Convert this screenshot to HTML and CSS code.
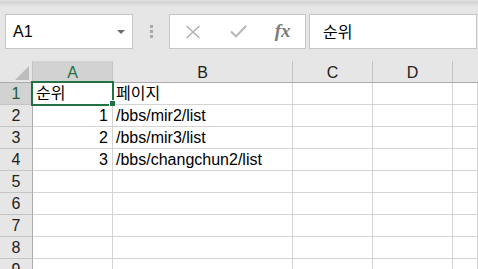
FILE: index.html
```html
<!DOCTYPE html>
<html lang="ko">
<head>
    <meta charset="UTF-8">
    <title>Sheet</title>
    <link rel="stylesheet" href="styles.css">
</head>
<body>
    <!-- Name box + formula bar -->
    <div class="toolbar">
        <div class="name-box">
            <span>A1</span>
            <span class="arrow"></span>
        </div>
        <div class="grip"><i></i><i></i><i></i></div>
        <div class="fx-buttons">
            <span class="fx-btn">
                <svg width="16" height="14" viewBox="0 0 16 14"><path d="M1.5 1 L14.5 13 M14.5 1 L1.5 13" stroke="#b3b3b3" stroke-width="1.6" fill="none"/></svg>
            </span>
            <span class="fx-btn">
                <svg width="17" height="13" viewBox="0 0 17 13"><path d="M1 6.5 L6 11.5 L16 1" stroke="#b3b3b3" stroke-width="1.9" fill="none"/></svg>
            </span>
            <span class="fx-btn fx-label">fx</span>
        </div>
        <div class="formula">순위</div>
    </div>

    <!-- Grid -->
    <div class="sheet-wrap">
        <div class="sheet">
            <div class="corner"><span class="tri"></span></div>
            <div class="col-head active">A</div>
            <div class="col-head">B</div>
            <div class="col-head">C</div>
            <div class="col-head">D</div>
            <div class="col-head last"></div>

            <div class="row-head active">1</div>
            <div class="cell">순위</div>
            <div class="cell">페이지</div>
            <div class="cell"></div><div class="cell"></div><div class="cell"></div>

            <div class="row-head">2</div>
            <div class="cell num">1</div>
            <div class="cell">/bbs/mir2/list</div>
            <div class="cell"></div><div class="cell"></div><div class="cell"></div>

            <div class="row-head">3</div>
            <div class="cell num">2</div>
            <div class="cell">/bbs/mir3/list</div>
            <div class="cell"></div><div class="cell"></div><div class="cell"></div>

            <div class="row-head">4</div>
            <div class="cell num">3</div>
            <div class="cell">/bbs/changchun2/list</div>
            <div class="cell"></div><div class="cell"></div><div class="cell"></div>

            <div class="row-head">5</div>
            <div class="cell"></div><div class="cell"></div><div class="cell"></div><div class="cell"></div><div class="cell"></div>
            <div class="row-head">6</div>
            <div class="cell"></div><div class="cell"></div><div class="cell"></div><div class="cell"></div><div class="cell"></div>
            <div class="row-head">7</div>
            <div class="cell"></div><div class="cell"></div><div class="cell"></div><div class="cell"></div><div class="cell"></div>
            <div class="row-head">8</div>
            <div class="cell"></div><div class="cell"></div><div class="cell"></div><div class="cell"></div><div class="cell"></div>
            <div class="row-head">9</div>
            <div class="cell"></div><div class="cell"></div><div class="cell"></div><div class="cell"></div><div class="cell"></div>
        </div>

        <!-- selection on A1 -->
        <div class="selection"></div>
        <div class="fill-handle"></div>
    </div>
</body>
</html>
```

FILE: styles.css
```css
body {
    margin: 0;
    padding: 0;
    overflow: hidden;
    background: #fff;
    font-family: "Liberation Sans", Arial, "Noto Sans CJK KR", sans-serif;
    font-size: 16px;
    color: #000;
}

.toolbar {
    height: 61px;
    box-sizing: border-box;
    padding: 14px 0 0 5px;
    display: flex;
    align-items: flex-start;
    background: linear-gradient(#e2e2e2 0, #d3d3d3 2px, #e6e6e6 7px);
}

.name-box {
    width: 128px;
    height: 35px;
    box-sizing: border-box;
    border: 1px solid #c6c6c6;
    background: #fff;
    display: flex;
    align-items: center;
    justify-content: space-between;
    padding: 0 7px 0 7px;
    font-size: 16px;
}

.name-box .arrow {
    width: 0;
    height: 0;
    border-left: 4px solid transparent;
    border-right: 4px solid transparent;
    border-top: 4px solid #6b6b6b;
    margin-top: 1px;
}

.grip {
    width: 36px;
    height: 35px;
    display: flex;
    flex-direction: column;
    align-items: center;
    justify-content: center;
    gap: 2px;
    padding-left: 1px;
    box-sizing: border-box;
}

.grip i {
    width: 3px;
    height: 3px;
    background: #a8a8a8;
}

.fx-buttons {
    width: 137px;
    height: 35px;
    box-sizing: border-box;
    border: 1px solid #c6c6c6;
    background: #fff;
    display: flex;
    padding-left: 1px;
}

.fx-btn {
    width: 45px;
    display: flex;
    align-items: center;
    justify-content: center;
}

.fx-label {
    font-family: "Liberation Serif", "Times New Roman", serif;
    font-style: italic;
    font-weight: bold;
    font-size: 19px;
    color: #7a7a7a;
    padding-bottom: 2px;
}

.formula {
    width: 168px;
    height: 35px;
    margin-left: 3px;
    box-sizing: border-box;
    border: 1px solid #c6c6c6;
    background: #fff;
    padding-left: 13px;
    line-height: 32px;
    font-family: "Noto Sans CJK KR", sans-serif;
    font-size: 16px;
}

.sheet-wrap {
    position: relative;
}

.sheet {
    display: grid;
    grid-template-columns: 33px 80px 180px 80px 80px 1fr;
    grid-auto-rows: 22px;
}

.sheet > div {
    box-sizing: border-box;
    line-height: 21px;
    white-space: nowrap;
}

.corner {
    position: relative;
    background: #e6e6e6;
    border-right: 1px solid #c4c4c4;
    border-bottom: 1px solid #ababab;
}

.corner .tri {
    position: absolute;
    right: 3px;
    bottom: 2px;
    width: 0;
    height: 0;
    border-left: 14px solid transparent;
    border-bottom: 14px solid #bdbdbd;
}

.col-head {
    background: #e6e6e6;
    border-right: 1px solid #c4c4c4;
    border-bottom: 1px solid #ababab;
    text-align: center;
    padding-top: 1px;
    color: #222;
}

.col-head.last {
    border-right: none;
}

.col-head.active {
    background: #d2d2d2;
    color: #217346;
}

.row-head {
    background: #e6e6e6;
    border-right: 1px solid #ababab;
    border-bottom: 1px solid #c4c4c4;
    text-align: center;
    color: #222;
}

.row-head.active {
    background: #d2d2d2;
    color: #1e5a3a;
}

.cell {
    border-right: 1px solid #d4d4d4;
    border-bottom: 1px solid #d4d4d4;
    padding: 0 3px;
    overflow: visible;
}

.cell.num {
    text-align: right;
    padding-right: 4px;
}

.selection {
    position: absolute;
    left: 31px;
    top: 20px;
    width: 83px;
    height: 25px;
    box-sizing: border-box;
    border: 2px solid #217346;
}

.fill-handle {
    position: absolute;
    left: 109px;
    top: 39px;
    width: 5px;
    height: 5px;
    background: #217346;
    border-top: 1px solid #fff;
    border-left: 1px solid #fff;
}
```
